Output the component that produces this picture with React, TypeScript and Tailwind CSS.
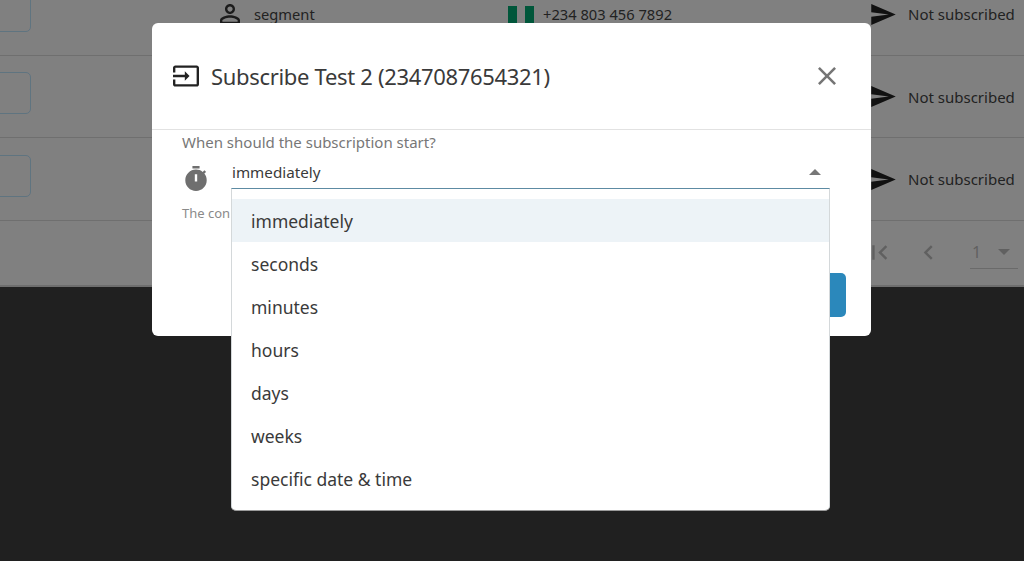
const FONT = "font-['Noto_Sans',sans-serif]";

const OPTIONS = ["immediately", "seconds", "minutes", "hours", "days", "weeks", "specific date & time"];

function PersonIcon() {
  return (
    <svg viewBox="0 0 24 24" className="w-[30px] h-[30px] fill-[#1c1c1c]">
      <path d="M12 5.9c1.16 0 2.1.94 2.1 2.1s-.94 2.1-2.1 2.1S9.9 9.16 9.9 8s.94-2.1 2.1-2.1m0 9c2.97 0 6.1 1.46 6.1 2.1v1.1H5.9V17c0-.64 3.13-2.1 6.1-2.1M12 4C9.79 4 8 5.79 8 8s1.79 4 4 4 4-1.79 4-4-1.79-4-4-4zm0 9c-2.67 0-8 1.34-8 4v3h16v-3c0-2.66-5.33-4-8-4z" />
    </svg>
  );
}

function SendIcon() {
  return (
    <svg viewBox="2 3 21 18" className="w-[25px] h-[21px] fill-[#111]">
      <path d="M2.01 21L23 12 2.01 3 2 10l15 2-15 2z" />
    </svg>
  );
}

function Row({ showContact }: { showContact?: boolean }) {
  return (
    <div className="h-[82.5px] shrink-0 flex items-center pt-[1px] border-b border-[#6f6f6f]">
      <div className="w-[218px] shrink-0">
        <div className="w-[60px] h-[42px] -ml-[29px] mb-[7px] rounded-[5px] border border-[#5f7480]" />
      </div>
      {showContact ? (
        <>
          <div className="w-[290px] shrink-0 flex items-center gap-[9px] -ml-[3px]">
            <PersonIcon />
            <span className="text-[14.7px] text-[#222]">segment</span>
          </div>
          <div className="w-[363px] shrink-0 flex items-center gap-[9px] ml-[3px]">
            <div className="w-[26px] h-[17px] flex">
              <div className="flex-1 bg-[#00563a]" />
              <div className="flex-1 bg-[#808080]" />
              <div className="flex-1 bg-[#00563a]" />
            </div>
            <span className="text-[14.7px] text-[#222]">+234 803 456 7892</span>
          </div>
        </>
      ) : (
        <div className="w-[653px] shrink-0" />
      )}
      <div className="flex items-center gap-[12px]">
        <SendIcon />
        <span className="text-[15px] text-[#222] whitespace-nowrap">Not subscribed</span>
      </div>
    </div>
  );
}

function Pagination() {
  return (
    <div className="h-[66px] flex items-center justify-end pr-[6px] border-b-[2px] border-[#6e6e6e] text-[#606060]">
      <svg viewBox="0 0 24 24" className="w-[29px] h-[29px] fill-[#606060] mr-[20px]">
        <path d="M18.41 16.59 13.82 12l4.59-4.59L17 6l-6 6 6 6zM6 6h2v12H6z" />
      </svg>
      <svg viewBox="0 0 24 24" className="w-[29px] h-[29px] fill-[#606060] mr-[27px]">
        <path d="M15.41 7.41 14 6l-6 6 6 6 1.41-1.41L10.83 12z" />
      </svg>
      <div className="w-[48px] h-[32px] flex items-center justify-between px-[1px] border-b border-[#6a6a6a]">
        <span className="text-[16px] ml-[1px]">1</span>
        <span className="w-0 h-0 border-x-[6px] border-x-transparent border-t-[6px] border-t-[#606060] mr-[7px]" />
      </div>
    </div>
  );
}

function Dropdown() {
  return (
    <div className="absolute left-[79px] top-[165px] w-[599px] h-[323px] bg-white rounded-b-[5px] border border-[#d4d8da] border-t-[#5d8ba3] border-b-[#9a9a9a] pt-[10px] z-10">
      {OPTIONS.map((opt, i) => (
        <div
          key={opt}
          className={`h-[43px] flex items-center pl-[19px] pt-[2px] text-[17.5px] text-[#3a3a3a] ${i === 0 ? "bg-[#edf3f7]" : ""}`}
        >
          {opt}
        </div>
      ))}
    </div>
  );
}

function Modal() {
  return (
    <div className="absolute left-[152px] top-[23px] w-[719px] h-[313px] bg-white rounded-[6px]">
      {/* Header */}
      <div className="h-[107px] flex items-center pl-[21px] pr-[35px] border-b border-[#e2e2e2]">
        <svg viewBox="1 3 22 18" className="w-[26px] h-[22px] fill-[#222] mr-[12px]">
          <path d="M21 3.01H3c-1.1 0-2 .9-2 2V9h2V4.99h18v14.03H3V15H1v4.01c0 1.1.9 1.98 2 1.98h18c1.1 0 2-.88 2-1.98v-14c0-1.11-.9-2-2-2zM11 16l4-4-4-4v3H1v2h10v3z" />
        </svg>
        <h2 className="text-[22px] tracking-[-0.32px] text-[#3a3a3a] whitespace-nowrap">Subscribe Test 2 (2347087654321)</h2>
        <svg viewBox="5 5 14 14" className="w-[18px] h-[18px] fill-[#757575] ml-auto">
          <path d="M19 6.41 17.59 5 12 10.59 6.41 5 5 6.41 10.59 12 5 17.59 6.41 19 12 13.41 17.59 19 19 17.59 13.41 12z" />
        </svg>
      </div>

      {/* Body */}
      <div className="pl-[30px] pr-[41px]">
        <p className="mt-[2px] text-[15px] leading-[21px] text-[#777]">When should the subscription start?</p>
        <div className="flex items-center mt-[4px] h-[34px]">
          <svg viewBox="3 1 18 21" className="w-[22px] h-[25px] fill-[#6f6f6f] ml-[3px] mt-[9px] shrink-0">
            <path d="M9 1h6v2H9zm10.03 6.39 1.42-1.42c-.43-.51-.9-.99-1.41-1.41l-1.42 1.42C16.07 4.74 14.12 4 12 4c-4.97 0-9 4.03-9 9s4.02 9 9 9 9-4.03 9-9c0-2.12-.74-4.07-1.97-5.61zM13 14h-2V8h2v6z" />
          </svg>
          <div className="flex-1 flex items-center justify-between ml-[25px] pr-[9px] -mt-[4px]">
            <span className="text-[15.2px] text-[#3a3a3a]">immediately</span>
            <span className="w-0 h-0 border-x-[6.5px] border-x-transparent border-b-[6px] border-b-[#777]" />
          </div>
        </div>
        <p className="mt-[13px] text-[13px] text-[#8a8a8a] whitespace-nowrap">The con</p>
      </div>

      {/* Submit button, mostly hidden behind the open menu */}
      <div className="absolute right-[25px] top-[250px] w-[110px] h-[44px] rounded-[5px] bg-[#2b88bb]" />

      <Dropdown />
    </div>
  );
}

export default function App() {
  return (
    <div className={`relative w-[1024px] h-[561px] overflow-hidden bg-[#202020] ${FONT}`}>
      {/* Dimmed page behind the dialog */}
      <div className="h-[314px] -mt-[27px] bg-[#808080] overflow-hidden">
        <Row showContact />
        <Row />
        <Row />
        <Pagination />
      </div>
      <Modal />
    </div>
  );
}
